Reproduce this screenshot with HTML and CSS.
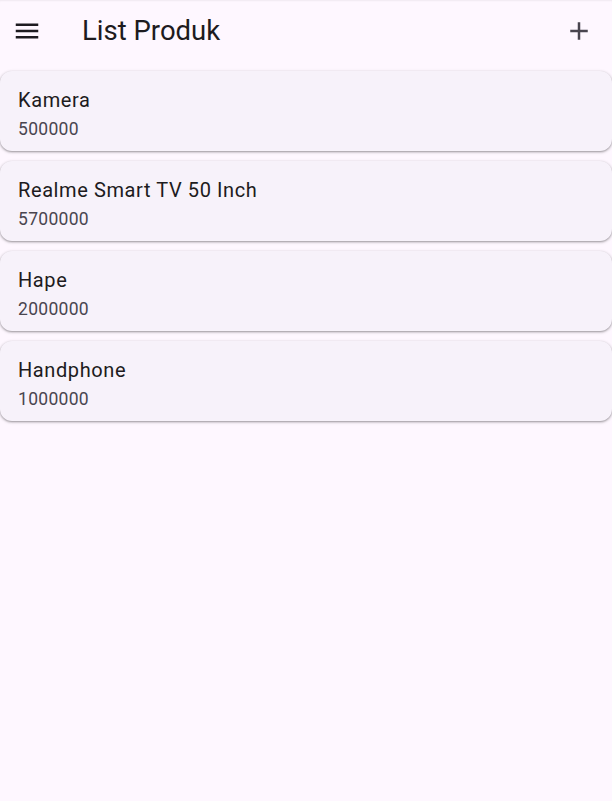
FILE: index.html
```html
<!DOCTYPE html>
<html lang="id">
<head>
<meta charset="utf-8">
<title>List Produk</title>
<link rel="stylesheet" href="styles.css">
</head>
<body>
<header class="appbar">
  <button class="icon-btn" aria-label="Menu">
    <svg width="30" height="30" viewBox="0 0 24 24"><path d="M3 18h18v-2H3v2zm0-5h18v-2H3v2zm0-7v2h18V6H3z"/></svg>
  </button>
  <h1 class="title">List Produk</h1>
  <button class="icon-btn icon-add" aria-label="Tambah">
    <svg width="30" height="30" viewBox="0 0 24 24"><path d="M19 13h-6v6h-2v-6H5v-2h6V5h2v6h6v2z"/></svg>
  </button>
</header>
<main class="list">
  <div class="card"><div class="card-title">Kamera</div><div class="card-sub">500000</div></div>
  <div class="card"><div class="card-title">Realme Smart TV 50 Inch</div><div class="card-sub">5700000</div></div>
  <div class="card"><div class="card-title">Hape</div><div class="card-sub">2000000</div></div>
  <div class="card"><div class="card-title">Handphone</div><div class="card-sub">1000000</div></div>
</main>
</body>
</html>
```
FILE: styles.css
```css
html, body {
  margin: 0;
  padding: 0;
  background: #fef7ff;
  height: 100%;
}
body {
  font-family: Roboto, "Noto Sans", sans-serif;
  color: #1d1b20;
  box-shadow: inset 0 2px 2px -1px rgba(0,0,0,0.06);
}
.appbar {
  height: 61px;
  display: flex;
  align-items: center;
  padding: 0 18px 0 12px;
}
.icon-btn {
  width: 30px;
  height: 30px;
  border: 0;
  background: transparent;
  padding: 0;
  display: flex;
  align-items: center;
  justify-content: center;
}
.icon-btn svg {
  fill: #1d1b20;
  display: block;
}
.icon-add svg {
  fill: #49454f;
}
.title {
  flex: 1;
  margin: 0 0 0 40px;
  font-size: 27.5px;
  line-height: 35px;
  font-weight: 400;
  color: #1d1b20;
}
.list {
  display: flex;
  flex-direction: column;
  gap: 10px;
  padding-top: 10px;
}
.card {
  background: #f7f2fa;
  border-radius: 12px;
  height: 80px;
  box-sizing: border-box;
  padding: 14px 16px 0 18px;
  box-shadow: 0 1px 2px rgba(0,0,0,0.3), 0 1px 3px 1px rgba(0,0,0,0.1);
}
.card-title {
  font-size: 20px;
  line-height: 30px;
  letter-spacing: 0.6px;
  color: #1d1b20;
}
.card-sub {
  font-size: 17.5px;
  line-height: 25px;
  letter-spacing: 0.3px;
  color: #49454f;
  margin-top: 2px;
}
```
